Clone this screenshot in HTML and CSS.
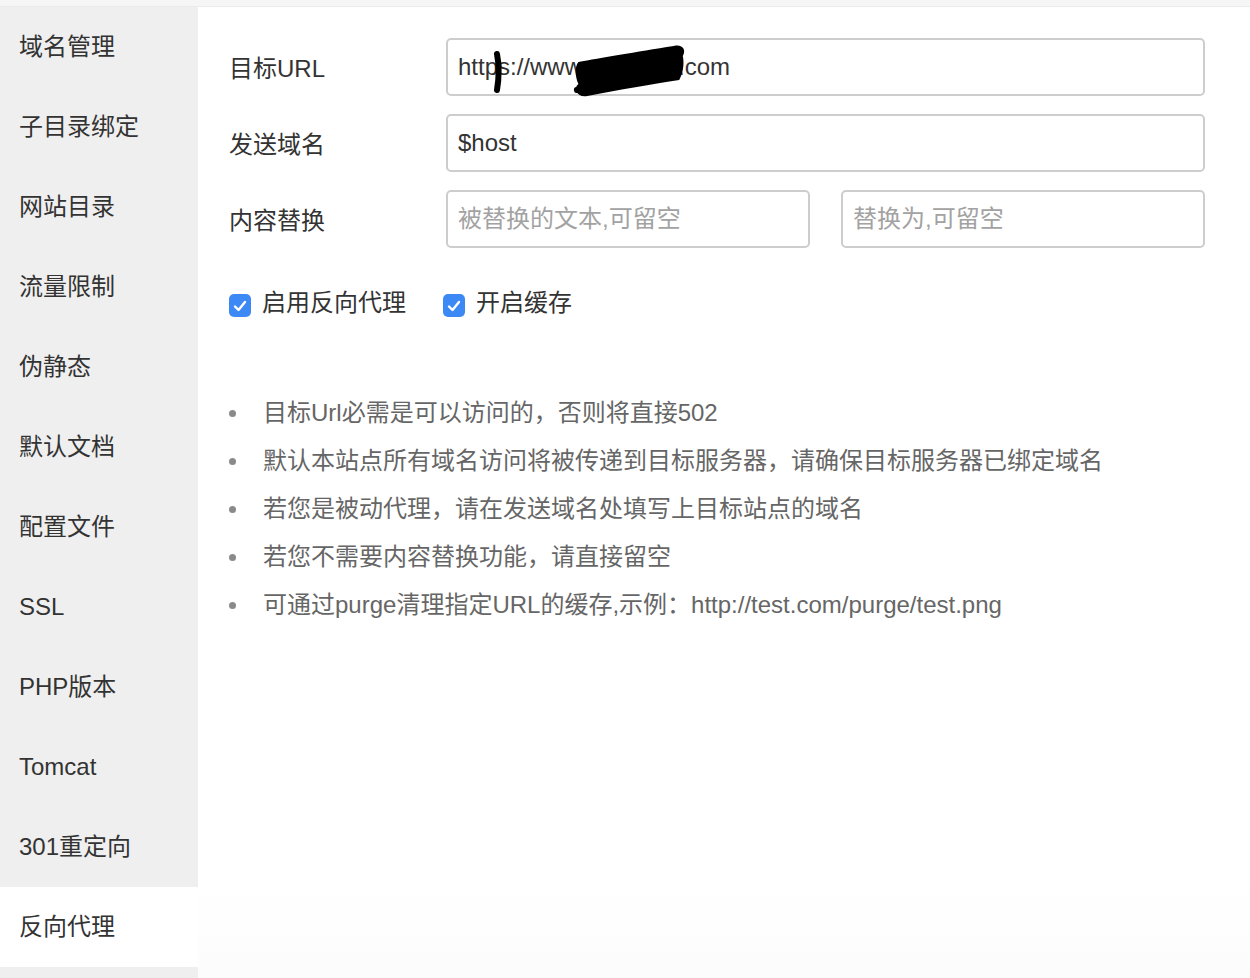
FILE: index.html
```html
<!DOCTYPE html>
<html lang="zh-CN">
<head>
  <meta charset="UTF-8">
  <title>反向代理</title>
  <link rel="stylesheet" href="styles.css">
</head>
<body>
  <div class="topbar"></div>
  <div class="layout">
    <ul class="side-menu">
      <li>域名管理</li>
      <li>子目录绑定</li>
      <li>网站目录</li>
      <li>流量限制</li>
      <li>伪静态</li>
      <li>默认文档</li>
      <li>配置文件</li>
      <li>SSL</li>
      <li>PHP版本</li>
      <li>Tomcat</li>
      <li>301重定向</li>
      <li class="active">反向代理</li>
    </ul>

    <div class="main">
      <div class="form-row">
        <label class="form-label">目标URL</label>
        <div class="field">
          <input class="text-input" type="text" value="https://www.example.com">
          <!-- redaction scribbles -->
          <svg class="scribble" width="12" height="44" viewBox="0 0 12 44">
            <path d="M5 4 C7 14, 7 28, 5 40" stroke="#000" stroke-width="6" stroke-linecap="round" fill="none"/>
          </svg>
          <svg class="scribble-main" width="120" height="56" viewBox="0 0 120 56">
            <g transform="scale(0.9 1)">
              <path d="M6 18 C30 14, 70 8, 112 2 C122 0, 126 6, 122 12 C124 20, 122 30, 118 36 C90 40, 50 46, 16 52 C4 54, 0 44, 6 40 C2 32, 2 22, 6 18 Z" fill="#000"/>
              <path d="M4 46 C30 40, 60 36, 100 30" stroke="#000" stroke-width="6" stroke-linecap="round" fill="none"/>
            </g>
          </svg>
        </div>
      </div>

      <div class="form-row">
        <label class="form-label">发送域名</label>
        <div class="field">
          <input class="text-input" type="text" value="$host">
        </div>
      </div>

      <div class="form-row">
        <label class="form-label">内容替换</label>
        <div class="field split">
          <input class="text-input" type="text" placeholder="被替换的文本,可留空">
          <input class="text-input" type="text" placeholder="替换为,可留空">
        </div>
      </div>

      <div class="checks">
        <label class="check"><span class="box"><svg width="14" height="12" viewBox="0 0 14 12"><path d="M2 6.5 L5.5 10 L12 2" stroke="#fff" stroke-width="2.4" fill="none" stroke-linecap="round" stroke-linejoin="round"/></svg></span>启用反向代理</label>
        <label class="check"><span class="box"><svg width="14" height="12" viewBox="0 0 14 12"><path d="M2 6.5 L5.5 10 L12 2" stroke="#fff" stroke-width="2.4" fill="none" stroke-linecap="round" stroke-linejoin="round"/></svg></span>开启缓存</label>
      </div>

      <ul class="tips">
        <li>目标Url必需是可以访问的，否则将直接502</li>
        <li>默认本站点所有域名访问将被传递到目标服务器，请确保目标服务器已绑定域名</li>
        <li>若您是被动代理，请在发送域名处填写上目标站点的域名</li>
        <li>若您不需要内容替换功能，请直接留空</li>
        <li>可通过purge清理指定URL的缓存,示例：http://test.com/purge/test.png</li>
      </ul>
    </div>
  </div>
</body>
</html>
```

FILE: styles.css
```css
html, body {
  margin: 0;
  padding: 0;
  height: 100%;
}

body {
  font-family: "Liberation Sans", "Noto Sans CJK SC", sans-serif;
  font-size: 24px;
  color: #333;
  background: #fff;
  overflow: hidden;
}

.topbar {
  height: 6px;
  background: #f6f6f6;
  border-bottom: 1px solid #ebebeb;
}

.layout {
  display: flex;
  min-height: calc(100vh - 7px);
}

.side-menu {
  width: 198px;
  margin: 0;
  padding: 0;
  list-style: none;
  background: #efefef;
  flex-shrink: 0;
}

.side-menu li {
  height: 80px;
  line-height: 80px;
  padding-left: 19px;
  color: #333;
}

.side-menu li.active {
  background: #fff;
}

.main {
  flex: 1;
  padding: 31px 45px 0 31px;
  background: linear-gradient(to bottom, #fff 90%, #fcfcfc);
}

.form-row {
  display: flex;
  align-items: center;
  height: 58px;
  margin-bottom: 18px;
}

.form-label {
  width: 217px;
  flex-shrink: 0;
  margin-top: -2px;
}

.field {
  flex: 1;
  display: flex;
  height: 100%;
  position: relative;
}

.field.split {
  gap: 31px;
}

.text-input {
  flex: 1;
  min-width: 0;
  height: 100%;
  box-sizing: border-box;
  border: 2px solid #cdcdcd;
  border-radius: 5px;
  padding: 0 10px;
  font-family: "Liberation Sans", "Noto Sans CJK SC", sans-serif;
  font-size: 24px;
  color: #333;
  outline: none;
}

.text-input::placeholder {
  color: #a2a2a2;
}

.scribble {
  position: absolute;
  left: 46px;
  top: 12px;
}

.scribble-main {
  position: absolute;
  left: 127px;
  top: 6px;
}

.checks {
  display: flex;
  gap: 37px;
  margin-top: 40px;
  line-height: 24px;
}

.check {
  display: flex;
  align-items: center;
}

.box {
  width: 22px;
  height: 23px;
  margin: 6px 11px 0 0;
  border-radius: 5px;
  background: #3c89f6;
  display: flex;
  align-items: center;
  justify-content: center;
}

.tips {
  list-style: none;
  margin: 72px 0 0 0;
  padding: 0;
  color: #666;
}

.tips li {
  position: relative;
  line-height: 48px;
  padding-left: 34px;
}

.tips li::before {
  content: "";
  position: absolute;
  left: 0;
  top: 21px;
  width: 7px;
  height: 7px;
  border-radius: 50%;
  background: #8a8a8a;
}
```
